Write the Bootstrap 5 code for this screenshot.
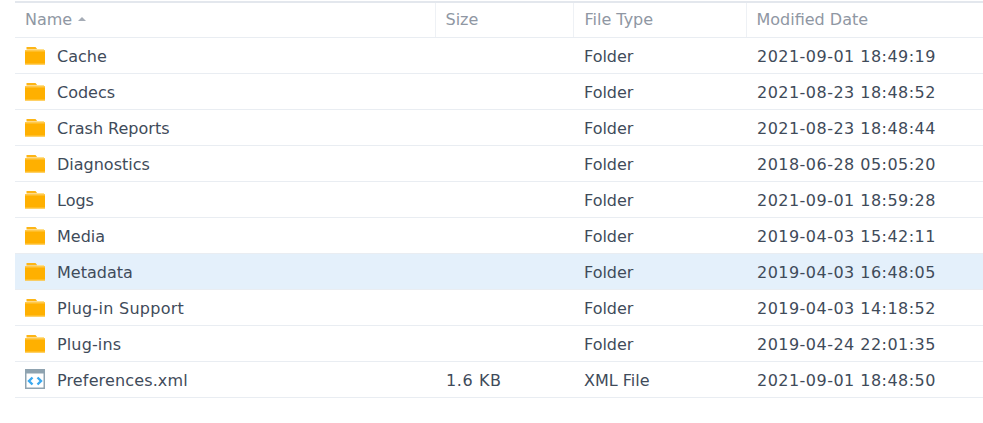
<!DOCTYPE html>
<html>
<head>
    <title>File Browser</title>
    <meta name="viewport" content="width=device-width, initial-scale=1">
    <link href="https://cdn.jsdelivr.net/npm/bootstrap@5.3.0/dist/css/bootstrap.min.css" rel="stylesheet">
    <style>
        body {
            background: #fff;
            font-family: "DejaVu Sans", sans-serif;
            padding: 1px 0 0 15px;
        }

        .file-table {
            table-layout: fixed;
            width: 968px;
            margin: 0;
            font-size: 16px;
            color: #3f4b5a;
            border-top: 2px solid #e3e7ed;
        }

        .file-table th, .file-table td {
            height: 36px;
            padding: 4px 10px 0 11px;
            border-bottom: 1px solid #e9edf2;
            font-weight: 400;
            vertical-align: middle;
            white-space: nowrap;
            background: transparent;
            color: inherit;
        }

        .file-table td:first-child, .file-table th:first-child { padding-left: 10px; }

        .file-table thead th {
            height: 35px;
            padding-top: 1px;
            color: #8f97a3;
            border-right: 1px solid #eef1f5;
        }

        .file-table thead th:nth-child(2), .file-table thead th:last-child { padding-left: 10px; }
        .file-table thead th:last-child { border-right: 0; }

        .file-table tr.row-active td { background: #e4f0fb; }

        .date-text { letter-spacing: .47px; }
        .size-text { letter-spacing: .6px; }
        .name-wide { letter-spacing: .14px; }
        .name-wider { letter-spacing: .27px; }

        .sort-caret {
            display: inline-block;
            width: 0;
            height: 0;
            margin-left: 1px;
            vertical-align: 4px;
            border-left: 4px solid transparent;
            border-right: 4px solid transparent;
            border-bottom: 4px solid #a5acb6;
        }

        .file-icon {
            width: 20px;
            height: 20px;
            margin: -4px 12px 0 0;
            flex: none;
        }
    </style>
</head>
<body>
    <table class="table file-table">
        <colgroup>
            <col style="width: 420px">
            <col style="width: 138px">
            <col style="width: 173px">
            <col>
        </colgroup>
        <thead>
            <tr>
                <th>Name <span class="sort-caret"></span></th>
                <th>Size</th>
                <th>File Type</th>
                <th>Modified Date</th>
            </tr>
        </thead>
        <tbody id="rows"></tbody>
    </table>

    <script src="https://cdn.jsdelivr.net/npm/bootstrap@5.3.0/dist/js/bootstrap.bundle.min.js"></script>
    <script>
        const folderIcon = `<svg class="file-icon" viewBox="0 0 20 20">
            <path d="M1.500 2h9l2 2.500h-11z" fill="#fdb515"/>
            <path d="M12 4h7v1.500h-7z" fill="#ffe08a"/>
            <path d="M0 6h20V19.500H0z" fill="#ffb000"/>
            <path d="M0 5h20V6.500H0zM0 18.500h20v1H0z" fill="#ffc94d"/>
        </svg>`;
        const xmlIcon = `<svg class="file-icon" viewBox="0 0 20 20">
            <rect x="0.750" y="0.750" width="18.500" height="18.500" fill="#fff" stroke="#8fa3b0" stroke-width="1.500"/>
            <rect x="0" y="0" width="20" height="4.500" fill="#8fa3b0"/>
            <path d="M7.500 8.500l-3.500 3.500 3.500 3.500M12.500 8.500l3.500 3.500-3.500 3.500" fill="none" stroke="#3aa9f0" stroke-width="2.400"/>
        </svg>`;

        const files = [
            ['Cache', '', 'Folder', '2021-09-01 18:49:19'],
            ['Codecs', '', 'Folder', '2021-08-23 18:48:52'],
            ['Crash Reports', '', 'Folder', '2021-08-23 18:48:44'],
            ['Diagnostics', '', 'Folder', '2018-06-28 05:05:20'],
            ['Logs', '', 'Folder', '2021-09-01 18:59:28'],
            ['Media', '', 'Folder', '2019-04-03 15:42:11'],
            ['Metadata', '', 'Folder', '2019-04-03 16:48:05'],
            ['Plug-in Support', '', 'Folder', '2019-04-03 14:18:52'],
            ['Plug-ins', '', 'Folder', '2019-04-24 22:01:35'],
            ['Preferences.xml', '1.6 KB', 'XML File', '2021-09-01 18:48:50']
        ];

        document.getElementById('rows').innerHTML = files.map(function(f) {
            const icon = f[2] === 'Folder' ? folderIcon : xmlIcon;
            const active = f[0] === 'Metadata' ? ' class="row-active"' : '';
            const nameClass = f[0] === 'Plug-in Support' ? 'name-wider' : /^(Plug|Pref)/.test(f[0]) ? 'name-wide' : '';
            return `<tr${active}>
                <td><div class="d-flex align-items-center">${icon}<span class="${nameClass}">${f[0]}</span></div></td>
                <td class="size-text">${f[1]}</td>
                <td>${f[2]}</td>
                <td class="date-text">${f[3]}</td>
            </tr>`;
        }).join('');
    </script>
</body>
</html>
